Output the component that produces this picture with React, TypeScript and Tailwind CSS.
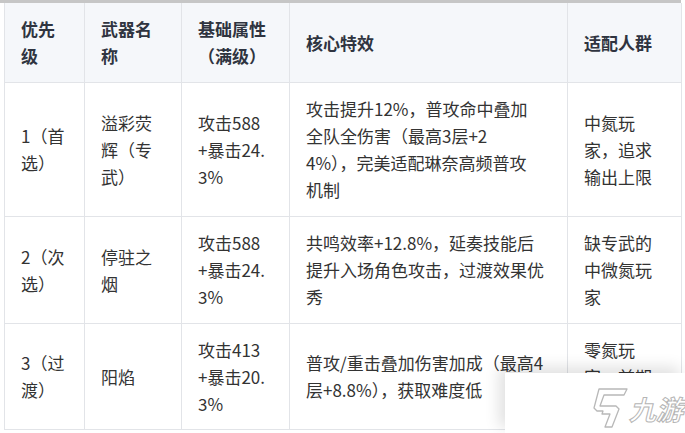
import React from "react";

type Row = {
  level: string[];
  name: string[];
  stats: string[];
  effect: string[];
  fit: string[];
  h: string;
};

const rows: Row[] = [
  {
    level: ["1（首", "选）"],
    name: ["溢彩荧", "辉（专", "武）"],
    stats: ["攻击588", "+暴击24.", "3%"],
    effect: ["攻击提升12%，普攻命中叠加", "全队全伤害（最高3层+2", "4%），完美适配琳奈高频普攻", "机制"],
    fit: ["中氮玩", "家，追求", "输出上限"],
    h: "h-[134px]",
  },
  {
    level: ["2（次", "选）"],
    name: ["停驻之", "烟"],
    stats: ["攻击588", "+暴击24.", "3%"],
    effect: ["共鸣效率+12.8%，延奏技能后", "提升入场角色攻击，过渡效果优", "秀"],
    fit: ["缺专武的", "中微氮玩", "家"],
    h: "h-[107px]",
  },
  {
    level: ["3（过", "渡）"],
    name: ["阳焰"],
    stats: ["攻击413", "+暴击20.", "3%"],
    effect: ["普攻/重击叠加伤害加成（最高4", "层+8.8%），获取难度低"],
    fit: ["零氮玩", "家，前期", "过渡"],
    h: "h-[106px]",
  },
];

const headers = [["优先", "级"], ["武器名", "称"], ["基础属性", "（满级）"], ["核心特效"], ["适配人群"]];
const widths = ["w-[80px]", "w-[97px]", "w-[108px]", "w-[278px]", "w-[114px]"];

function Lines({ lines }: { lines: string[] }) {
  return (
    <>
      {lines.map((l, i) => (
        <span key={i} className="block whitespace-nowrap">
          {l}
        </span>
      ))}
    </>
  );
}

function Watermark() {
  return (
    <div className="absolute left-[505px] top-[373px] w-[180px] h-[60px] bg-white shadow-[-6px_-6px_14px_rgba(0,0,0,0.12)] flex items-center justify-end pr-[2px] gap-[1px]">
      <svg width="38" height="42" viewBox="0 0 38 42" className="mt-[10px]">
        <path
          d="M9 2 L37 2 L34 8 L14 8 L10 19 L26 19 L29 22 L22 40 L15 40 L20 27 L12 27 L13 24 L7 24 L4 21 Z"
          fill="white"
          stroke="#b8b8b8"
          strokeWidth="1.3"
          strokeLinejoin="round"
        />
      </svg>
      <span className="mt-[10px] italic font-bold text-[27px] leading-none text-white [-webkit-text-stroke:1px_#b5b5b5] font-['Noto_Sans_CJK_SC',sans-serif]">
        九游
      </span>
    </div>
  );
}

export default function App() {
  return (
    <div className="relative w-[685px] h-[433px] bg-white overflow-hidden font-['Noto_Sans_CJK_SC','Microsoft_YaHei',sans-serif]">
      <div className="h-[3px] w-[681px] bg-[#c6c6c6]" />
      <table className="ml-[4px] table-fixed border-collapse text-[17px] leading-[27px] text-[#333]">
        <thead>
          <tr className="h-[79px] bg-[#f5f7fa]">
            {headers.map((h, i) => (
              <th
                key={i}
                className={`${widths[i]} border border-[#e2e4e8] border-t-0 px-[16px] text-left align-middle font-bold text-[#2f3440]`}
              >
                <Lines lines={h} />
              </th>
            ))}
          </tr>
        </thead>
        <tbody>
          {rows.map((r, idx) => (
            <tr key={idx} className={r.h}>
              <td className="border border-[#e2e4e8] px-[16px] align-middle">
                <Lines lines={r.level} />
              </td>
              <td className="border border-[#e2e4e8] px-[16px] align-middle">
                <Lines lines={r.name} />
              </td>
              <td className="border border-[#e2e4e8] px-[16px] align-middle">
                <Lines lines={r.stats} />
              </td>
              <td className="border border-[#e2e4e8] px-[16px] align-middle">
                <Lines lines={r.effect} />
              </td>
              <td className="border border-[#e2e4e8] px-[16px] align-middle">
                <Lines lines={r.fit} />
              </td>
            </tr>
          ))}
        </tbody>
      </table>
      <Watermark />
    </div>
  );
}
